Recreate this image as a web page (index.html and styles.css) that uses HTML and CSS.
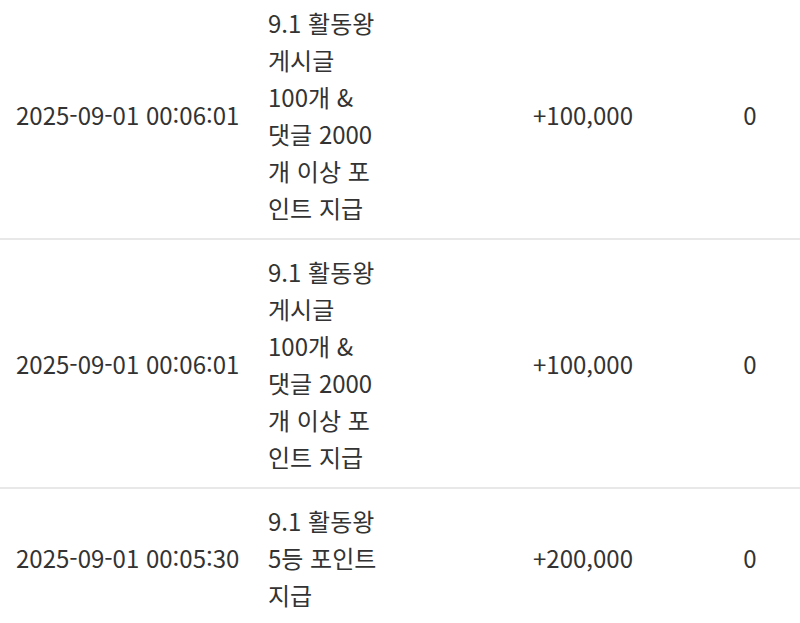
FILE: index.html
```html
<!DOCTYPE html>
<html lang="ko">
<head>
<meta charset="utf-8">
<link rel="stylesheet" href="styles.css">
</head>
<body>
<div class="list">
  <div class="row">
    <div class="cell date">2025-09-01 00:06:01</div>
    <div class="cell desc">9.1 활동왕 게시글 100개 &amp; 댓글 2000개 이상 포인트 지급</div>
    <div class="cell amount">+100,000</div>
    <div class="cell balance">0</div>
  </div>
  <div class="row">
    <div class="cell date">2025-09-01 00:06:01</div>
    <div class="cell desc">9.1 활동왕 게시글 100개 &amp; 댓글 2000개 이상 포인트 지급</div>
    <div class="cell amount">+100,000</div>
    <div class="cell balance">0</div>
  </div>
  <div class="row">
    <div class="cell date">2025-09-01 00:05:30</div>
    <div class="cell desc">9.1 활동왕 5등 포인트 지급</div>
    <div class="cell amount">+200,000</div>
    <div class="cell balance">0</div>
  </div>
</div>
</body>
</html>
```
FILE: styles.css
```css
html, body {
  margin: 0;
  padding: 0;
  background: #ffffff;
}
body {
  font-family: "Noto Sans CJK KR", "Noto Sans", sans-serif;
  font-size: 24px;
  line-height: 37px;
  color: #333333;
  overflow: hidden;
}
.list {
  margin-top: -9px;
}
.row {
  display: grid;
  grid-template-columns: 252px 214px 234px 1fr;
  align-items: center;
  padding: 12.5px 0;
  border-bottom: 2px solid #e8e8e8;
}
.date {
  padding-left: 16px;
  white-space: nowrap;
}
.desc {
  padding: 0 88px 0 16px;
  word-break: normal;
}
.amount,
.balance {
  text-align: center;
}
```
